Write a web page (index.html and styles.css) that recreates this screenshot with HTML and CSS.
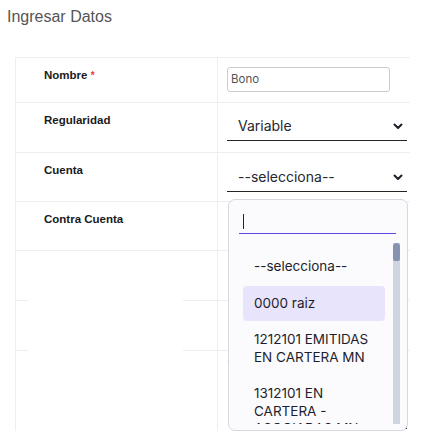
FILE: index.html
```html
<!DOCTYPE html>
<html lang="es">
<head>
<meta charset="utf-8">
<title>Ingresar Datos</title>
<link rel="stylesheet" href="styles.css">
</head>
<body>
<div class="page">
  <h2 class="title">Ingresar Datos</h2>
  <div class="form-table">
    <div class="row row-1">
      <div class="lbl">Nombre <span class="req">*</span></div>
      <div class="val"><div class="txt-input">Bono</div></div>
    </div>
    <div class="row row-2">
      <div class="lbl">Regularidad</div>
      <div class="val">
        <div class="select"><span>Variable</span>
          <svg class="chev" width="10" height="7" viewBox="0 0 10 7"><path d="M1.5 1.5 L5 5 L8.5 1.5" fill="none" stroke="#1f1f2a" stroke-width="2" stroke-linecap="round" stroke-linejoin="round"/></svg>
        </div>
      </div>
    </div>
    <div class="row row-3">
      <div class="lbl">Cuenta</div>
      <div class="val">
        <div class="select"><span>--selecciona--</span>
          <svg class="chev" width="10" height="7" viewBox="0 0 10 7"><path d="M1.5 1.5 L5 5 L8.5 1.5" fill="none" stroke="#1f1f2a" stroke-width="2" stroke-linecap="round" stroke-linejoin="round"/></svg>
        </div>
      </div>
    </div>
    <div class="row row-4">
      <div class="lbl">Contra Cuenta</div>
      <div class="val">
        <div class="dropdown">
          <div class="search"><span class="caret"></span></div>
          <div class="list">
            <div class="options">
              <div class="opt">--selecciona--</div>
              <div class="opt active">0000 raiz</div>
              <div class="opt">1212101 EMITIDAS EN CARTERA MN</div>
              <div class="opt">1312101 EN CARTERA - ASOCIADAS MN</div>
            </div>
            <div class="scroll"><div class="thumb"></div></div>
          </div>
        </div>
      </div>
    </div>
    <div class="row row-5"><div class="lbl"></div><div class="val"></div></div>
    <div class="row row-6"><div class="lbl"></div><div class="val"></div></div>
    <div class="row row-7">
      <div class="lbl"></div>
      <div class="val"><div class="hidden-block"><span class="warn">!</span><span class="btn-edge"></span></div></div>
    </div>
    <div class="blank-overlay"></div>
  </div>
</div>
</body>
</html>
```
FILE: styles.css
```css
html, body {
  margin: 0;
  padding: 0;
  background: #ffffff;
}
.page {
  width: 433px;
  height: 443px;
  overflow: hidden;
  font-family: "Liberation Sans", Arial, sans-serif;
}
.title {
  margin: 0;
  padding: 8px 7px 0;
  font-size: 16px;
  line-height: 18px;
  font-weight: normal;
  color: #555555;
}
.form-table {
  position: relative;
  margin: 31px 0 0 15px;
  width: 395px;
}
.row {
  display: grid;
  grid-template-columns: 202px 193px;
  border-top: 1px solid #eeeeee;
  box-sizing: border-box;
}
.row-1 { height: 45px; }
.row-2 { height: 50px; }
.row-3 { height: 49px; }
.row-4 { height: 49px; }
.row-5 { height: 50px; }
.row-6 { height: 50px; }
.row-7 { height: 81px; }
.lbl {
  border-left: 1px solid #eeeeee;
  padding: 11px 0 0 28px;
  font-size: 11.5px;
  line-height: 13px;
  font-weight: bold;
  color: #1a1a20;
}
.req {
  color: #e53935;
  font-size: 10px;
}
.val {
  position: relative;
  border-left: 1px solid #eeeeee;
  padding: 0 3px 0 9px;
}
.txt-input {
  margin-top: 9px;
  width: 163px;
  height: 25px;
  box-sizing: border-box;
  border: 1px solid #cccccc;
  border-radius: 3px;
  padding: 0 3px;
  font-family: Inter, "Liberation Sans", sans-serif;
  font-size: 11.5px;
  line-height: 23px;
  color: #555555;
}
.select {
  display: flex;
  align-items: center;
  justify-content: space-between;
  height: 30px;
  box-sizing: border-box;
  margin-top: 8px;
  padding: 0 4px 0 11px;
  border-bottom: 1px solid #222228;
  font-family: Inter, "Liberation Sans", sans-serif;
  font-size: 14px;
  color: #26262e;
}
.row-3 .select { margin-top: 9px; }
.chev { margin-top: 2px; }
.dropdown {
  position: absolute;
  top: -3px;
  left: 10px;
  width: 180px;
  height: 232px;
  box-sizing: border-box;
  background: #fbfbfe;
  border: 1px solid #d5d9df;
  border-radius: 7px;
  padding: 9px 7px 6px 14px;
  display: flex;
  flex-direction: column;
  z-index: 3;
  font-family: Inter, "Liberation Sans", sans-serif;
}
.search {
  height: 24px;
  margin: 0 4px 0 -4px;
  border-bottom: 1.5px solid #5e45e2;
  display: flex;
  align-items: center;
  padding-left: 4px;
}
.caret {
  display: block;
  width: 1px;
  height: 15px;
  background: #222228;
}
.list {
  margin-top: 9px;
  flex: 1;
  display: flex;
  gap: 8px;
  overflow: hidden;
}
.options {
  width: 142px;
  padding-top: 6px;
}
.opt {
  padding: 9px 12px 9px 11px;
  margin-bottom: 1px;
  font-size: 13.5px;
  line-height: 17.5px;
  color: #1e1e2c;
  border-radius: 4px;
}
.opt.active {
  background: #e8e4fc;
}
.scroll {
  width: 7px;
  background: #cfd4e1;
}
.thumb {
  height: 18px;
  background: #8592b1;
  border-radius: 4px 4px 3px 3px;
}
.hidden-block {
  margin-top: 9px;
  border-top: 1px solid #eeeeee;
  height: 70px;
  position: relative;
}
.warn {
  position: absolute;
  right: 0;
  top: 26px;
  font-size: 9px;
  font-weight: bold;
  color: #e38a1b;
}
.btn-edge {
  position: absolute;
  right: 0;
  top: 60px;
  width: 3px;
  height: 8px;
  background: #1b2a3a;
}
.blank-overlay {
  position: absolute;
  left: 13px;
  top: 194px;
  width: 155px;
  height: 190px;
  background: #ffffff;
}
```
